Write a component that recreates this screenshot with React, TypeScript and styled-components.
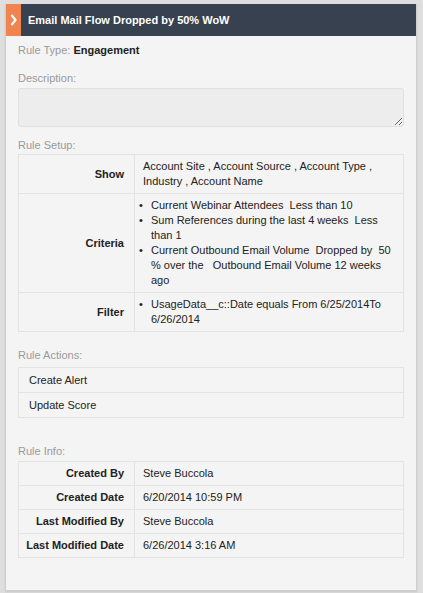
import styled, { createGlobalStyle } from "styled-components";

const GlobalStyle = createGlobalStyle`
  html, body {
    margin: 0;
    padding: 0;
    background: #dedede;
  }
  body {
    font-family: "Liberation Sans", Arial, Helvetica, sans-serif;
    font-size: 11px;
    color: #222;
  }
`;

const Page = styled.div`
  padding: 4px 6px 5px 5px;
`;

const Panel = styled.div`
  background: #f4f4f4;
  border: 1px solid #cfcfcf;
  border-top: none;
  box-shadow: 0 1px 2px rgb(0 0 0 / 10%);
`;

const Header = styled.div`
  display: flex;
  align-items: center;
  height: 32px;
  background: #37414f;
`;

const HeaderTab = styled.div`
  display: flex;
  align-items: center;
  justify-content: center;
  width: 15px;
  align-self: stretch;
  background: #ef8450;
`;

const HeaderTitle = styled.h2`
  margin: 0 0 0 7px;
  font-size: 11px;
  font-weight: bold;
  color: #fff;
`;

const Body = styled.div`
  display: flex;
  flex-direction: column;
  padding: 7px 12px 32px 12px;
  line-height: 15px;
`;

const FieldLabel = styled.div<{ $top?: number; $bottom?: number }>`
  color: #9a9a9a;
  margin-top: ${(p) => p.$top ?? 0}px;
  margin-bottom: ${(p) => p.$bottom ?? 0}px;
`;

const Strong = styled.span`
  color: #222;
  font-weight: bold;
`;

const TextArea = styled.textarea`
  display: block;
  box-sizing: border-box;
  width: 100%;
  height: 39px;
  margin: 0;
  background: #ededed;
  border: 1px solid #e0e0e0;
  border-radius: 3px;
  font: inherit;
  outline: none;
`;

const Table = styled.table`
  width: 100%;
  border-collapse: collapse;
  border: 1px solid #e3e3e3;
`;

const HeadCell = styled.th`
  width: 116px;
  box-sizing: border-box;
  padding: 4px 10px 4px 6px;
  text-align: right;
  font-weight: bold;
  color: #222;
  border: 1px solid #e3e3e3;
  vertical-align: middle;
`;

const Cell = styled.td<{ $list?: boolean }>`
  padding: 4px 8px 4px ${(p) => (p.$list ? 4 : 8)}px;
  text-align: left;
  border: 1px solid #e3e3e3;
  vertical-align: middle;
  color: #222;
`;

const ActionCell = styled.td`
  padding: 5px 10px 4px;
  border: 1px solid #e3e3e3;
  color: #222;
`;

const List = styled.ul`
  margin: 0;
  padding: 0;
  list-style: none;
`;

const Item = styled.li`
  display: flex;
  white-space: pre-wrap;
  &::before {
    content: "•";
    flex: none;
    width: 12px;
  }
`;

const Chevron = () => (
  <svg width="7" height="12" viewBox="0 0 7 12">
    <path d="M1.5 1 L5.5 6 L1.5 11" stroke="#fff" strokeWidth="2.2" fill="none" />
  </svg>
);

const setup: { label: string; text?: string; items?: string[] }[] = [
  { label: "Show", text: "Account Site , Account Source , Account Type , Industry , Account Name" },
  {
    label: "Criteria",
    items: [
      "Current Webinar Attendees  Less than 10",
      "Sum References during the last 4 weeks  Less than 1",
      "Current Outbound Email Volume  Dropped by  50 % over the   Outbound Email Volume 12 weeks ago",
    ],
  },
  { label: "Filter", items: ["UsageData__c::Date equals From 6/25/2014To 6/26/2014"] },
];

const info = [
  ["Created By", "Steve Buccola"],
  ["Created Date", "6/20/2014 10:59 PM"],
  ["Last Modified By", "Steve Buccola"],
  ["Last Modified Date", "6/26/2014 3:16 AM"],
];

export default function App() {
  return (
    <Page>
      <GlobalStyle />
      <Panel>
        <Header>
          <HeaderTab>
            <Chevron />
          </HeaderTab>
          <HeaderTitle>Email Mail Flow Dropped by 50% WoW</HeaderTitle>
        </Header>
        <Body>
          <FieldLabel>
            Rule Type: <Strong>Engagement</Strong>
          </FieldLabel>
          <FieldLabel $top={13} $bottom={2}>Description:</FieldLabel>
          <TextArea readOnly />
          <FieldLabel $top={11} $bottom={1}>Rule Setup:</FieldLabel>
          <Table>
            <tbody>
              {setup.map((row) => (
                <tr key={row.label}>
                  <HeadCell>{row.label}</HeadCell>
                  {row.items ? (
                    <Cell $list>
                      <List>
                        {row.items.map((t) => (
                          <Item key={t}>{t}</Item>
                        ))}
                      </List>
                    </Cell>
                  ) : (
                    <Cell>{row.text}</Cell>
                  )}
                </tr>
              ))}
            </tbody>
          </Table>
          <FieldLabel $top={16} $bottom={4}>Rule Actions:</FieldLabel>
          <Table>
            <tbody>
              {["Create Alert", "Update Score"].map((a) => (
                <tr key={a}>
                  <ActionCell>{a}</ActionCell>
                </tr>
              ))}
            </tbody>
          </Table>
          <FieldLabel $top={26} $bottom={2}>Rule Info:</FieldLabel>
          <Table>
            <tbody>
              {info.map(([k, v]) => (
                <tr key={k}>
                  <HeadCell>{k}</HeadCell>
                  <Cell>{v}</Cell>
                </tr>
              ))}
            </tbody>
          </Table>
        </Body>
      </Panel>
    </Page>
  );
}
